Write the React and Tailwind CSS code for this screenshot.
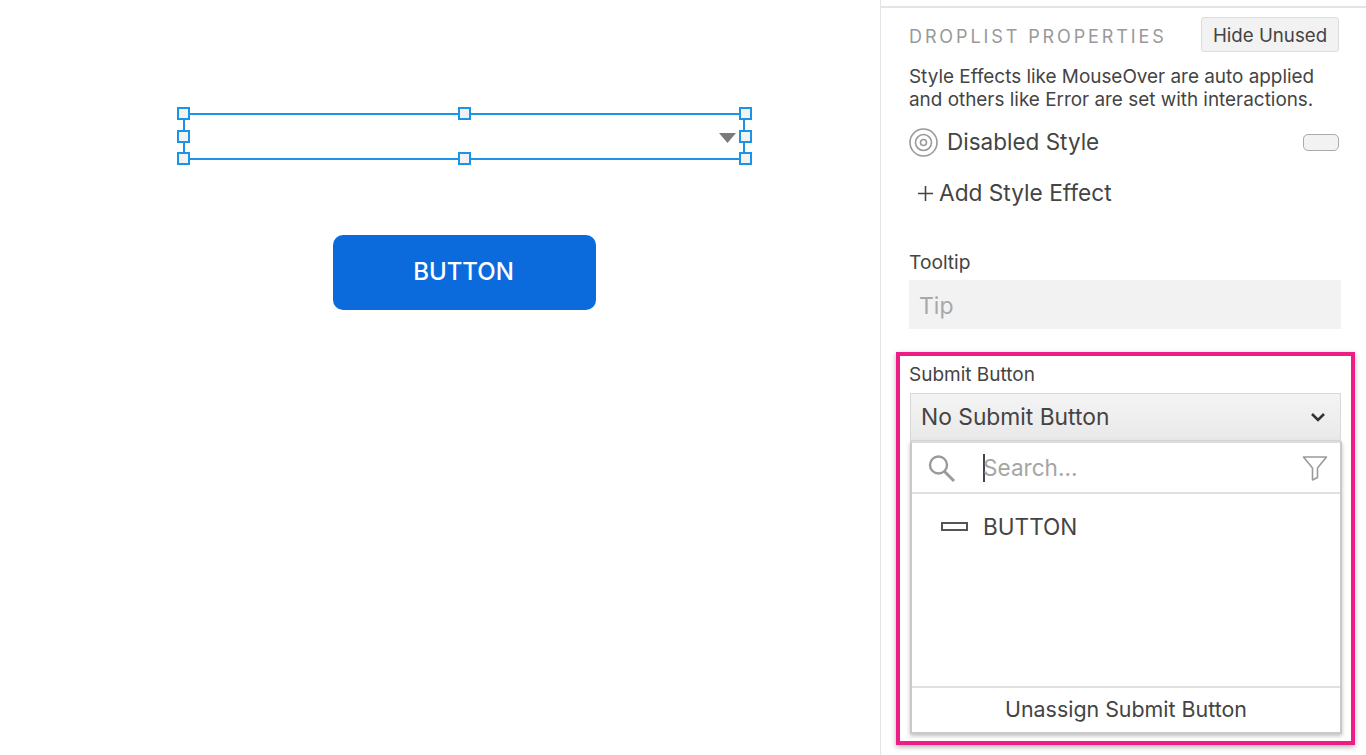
import React from 'react'

function Handle({ className }) {
  return <div className={`absolute w-[13px] h-[13px] bg-[#f2f2f2] border-2 border-[#1a94e6] ${className}`} />
}

function Canvas() {
  return (
    <div className="w-[880px] shrink-0 pt-[113px]">
      {/* Selected droplist */}
      <div className="relative ml-[183px] w-[562px] h-[47px] border-2 border-[#1a94e6]">
        <Handle className="left-[-8px] top-[-8px]" />
        <Handle className="left-[273px] top-[-8px]" />
        <Handle className="right-[-9px] top-[-8px]" />
        <Handle className="left-[-8px] top-[15px]" />
        <Handle className="right-[-9px] top-[15px]" />
        <Handle className="left-[-8px] bottom-[-7px]" />
        <Handle className="left-[273px] bottom-[-7px]" />
        <Handle className="right-[-9px] bottom-[-7px]" />
        <svg className="absolute left-[534px] top-[18px]" width="18" height="11" viewBox="0 0 18 11">
          <path d="M0 0h17L8.5 10z" fill="#7a7a7a" />
        </svg>
      </div>

      <button className="block ml-[333px] mt-[75px] w-[263px] h-[75px] pb-[2px] pr-[2px] rounded-[10px] bg-[#0b6bdc] text-white text-[24px] font-medium font-['Inter',sans-serif]">
        BUTTON
      </button>
    </div>
  )
}

function SubmitButtonPanel() {
  return (
    <div className="ml-[15px] mt-[23px] w-[459px] h-[393px] border-[4px] border-[#ec1e86] shadow-[0_2px_5px_rgba(0,0,0,0.3)] pl-[10px] pt-[6px]">
      <div className="ml-[-1px] text-[19px] leading-[26px] text-[#444]">Submit Button</div>
      <div className="mt-[5px] w-[431px] h-[48px] flex items-center justify-between pl-[10px] pr-[14px] bg-gradient-to-b from-[#f4f4f4] to-[#e9e9e9] border border-[#d8d8d8] text-[22.8px] text-[#444]">
        <span>No Submit Button</span>
        <svg width="16" height="10" viewBox="0 0 16 10" fill="none" stroke="#333" strokeWidth="2.6">
          <path d="M2 2l6 6 6-6" />
        </svg>
      </div>

      {/* Dropdown */}
      <div className="w-[432px] h-[293px] flex flex-col bg-white border-2 border-[#c9c9c9] border-t-[#dcdcdc] shadow-[0_2px_4px_rgba(0,0,0,0.25)]">
        <div className="h-[51px] shrink-0 flex items-center pl-[14px] pr-[12px] border-b-2 border-[#e0e0e0]">
          <svg width="30" height="30" viewBox="0 0 30 30" fill="none" stroke="#9a9a9a" className="shrink-0">
            <circle cx="12.5" cy="12" r="8.5" strokeWidth="2.4" />
            <path d="M18.5 18.5L28 28" strokeWidth="3" />
          </svg>
          <div className="ml-[27px] w-[2px] h-[28px] bg-[#444] shrink-0" />
          <span className="ml-[-2px] flex-1 text-[22.6px] text-[#a5a5a5]">Search...</span>
          <svg width="26" height="26" viewBox="0 0 26 26" fill="none" stroke="#9a9a9a" strokeWidth="1.6" strokeLinejoin="round">
            <path d="M1.5 2h23l-9 11v9.500l-5 2.500V13z" />
          </svg>
        </div>
        <div className="flex-1 pl-[29px] pt-[17px]">
          <div className="flex items-center h-[32px]">
            <div className="mb-[1px] w-[27px] h-[9px] border-2 border-[#555] bg-white" />
            <span className="ml-[15px] text-[22.6px] text-[#444]">BUTTON</span>
          </div>
        </div>
        <div className="h-[46px] shrink-0 pb-[2px] flex items-center justify-center border-t-2 border-[#e0e0e0] text-[21.4px] text-[#444]">
          Unassign Submit Button
        </div>
      </div>
    </div>
  )
}

function Sidebar() {
  return (
    <div className="flex-1 h-[755px] border-l border-[#e4e4e4] overflow-hidden">
      <div className="mt-[6px] h-[2px] bg-[#e4e4e4]" />
      <div className="pl-[28px] pr-[25px]">
        <div className="mt-[9px] flex items-center justify-between">
          <span className="mt-[3px] text-[18px] tracking-[2.900px] text-[#999]">DROPLIST PROPERTIES</span>
          <button className="mr-[2px] w-[138px] h-[35px] pt-[4px] rounded-[3px] bg-[#f2f2f2] border border-[#dcdcdc] text-[18.7px] text-[#444]">
            Hide Unused
          </button>
        </div>
        <p className="mt-[13px] text-[18.9px] leading-[23px] text-[#444] whitespace-nowrap">
          Style Effects like MouseOver are auto applied<br />
          and others like Error are set with interactions.
        </p>
        <div className="mt-[16px] flex items-center h-[30px]">
          <svg width="29" height="29" viewBox="0 0 29 29" fill="none" stroke="#999">
            <circle cx="14.5" cy="14.5" r="13.500" strokeWidth="1.6" />
            <circle cx="14.5" cy="14.5" r="8" strokeWidth="1.6" />
            <circle cx="14.5" cy="14.5" r="3" strokeWidth="1.6" />
          </svg>
          <span className="ml-[9px] text-[22.5px] text-[#444]">Disabled Style</span>
          <div className="ml-auto mr-[2px] w-[36px] h-[17px] rounded-[5px] bg-[#f2f2f2] border border-[#aaa]" />
        </div>
        <div className="mt-[21px] ml-[9px] flex items-center h-[30px] text-[22.7px] text-[#444]">
          <svg width="15" height="15" viewBox="0 0 15 15" stroke="#444" strokeWidth="1.600">
            <path d="M7.500 0v15M0 7.500h15" />
          </svg>
          <span className="ml-[6px]">Add Style Effect</span>
        </div>
        <div className="mt-[41px] text-[19.2px] leading-[26px] text-[#444]">Tooltip</div>
        <div className="mt-[5px] h-[49px] pt-[3px] flex items-center pl-[10px] bg-[#f2f2f2] text-[23px] text-[#a8a8a8]">Tip</div>
      </div>
      <SubmitButtonPanel />
    </div>
  )
}

export default function App() {
  return (
    <div className="flex w-[1366px] h-[755px] overflow-hidden bg-white font-['Inter',sans-serif]">
      <Canvas />
      <Sidebar />
    </div>
  )
}
